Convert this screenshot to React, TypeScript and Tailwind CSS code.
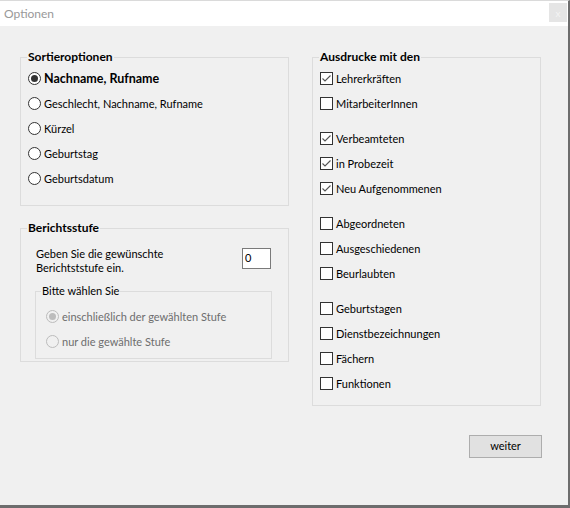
import React from "react";

const FONT = "font-['Lato',sans-serif]";

// Round option button, as drawn by the classic Windows dialog
const Radio: React.FC<{ label: string; checked?: boolean; disabled?: boolean; bold?: boolean }> = ({
  label,
  checked,
  disabled,
  bold,
}) => (
  <div className="flex h-[25px] items-center gap-[3px]">
    <span
      className={`flex h-[13px] w-[13px] shrink-0 items-center justify-center rounded-full border ${
        disabled ? "border-[#bcbcbc] bg-[#f0f0f0]" : "border-[#333333] bg-white"
      }`}
    >
      {checked && (
        <span className={`h-[7px] w-[7px] rounded-full ${disabled ? "bg-[#bcbcbc]" : "bg-[#333333]"}`} />
      )}
    </span>
    <span
      className={`whitespace-nowrap pt-[2px] ${bold ? "text-[12.5px] font-bold" : "text-[11px]"} ${
        disabled ? "text-[#6d6d6d]" : "text-black"
      }`}
    >
      {label}
    </span>
  </div>
);

const Check: React.FC<{ label: string; checked?: boolean }> = ({ label, checked }) => (
  <div className="flex h-[25px] items-center gap-[3px]">
    <span className="flex h-[13px] w-[13px] shrink-0 items-center justify-center border border-[#333333] bg-white">
      {checked && (
        <svg width="11" height="11" viewBox="0 0 11 11">
          <path d="M1.5 5.5 L4 8 L9.5 2.5" fill="none" stroke="#555" strokeWidth="1.1" />
        </svg>
      )}
    </span>
    <span className="whitespace-nowrap pt-[2px] text-[11px] text-black">{label}</span>
  </div>
);

const Group: React.FC<{ title: string; className?: string; children: React.ReactNode }> = ({
  title,
  className,
  children,
}) => (
  <fieldset className={`border border-[#dcdcdc] pl-[7px] ${className ?? ""}`}>
    <legend className="px-[1px] -ml-[1px] text-[12px] font-bold leading-[14px] text-black">{title}</legend>
    {children}
  </fieldset>
);

const printGroups: { label: string; checked?: boolean }[][] = [
  [{ label: "Lehrerkräften", checked: true }, { label: "MitarbeiterInnen" }],
  [
    { label: "Verbeamteten", checked: true },
    { label: "in Probezeit", checked: true },
    { label: "Neu Aufgenommenen", checked: true },
  ],
  [{ label: "Abgeordneten" }, { label: "Ausgeschiedenen" }, { label: "Beurlaubten" }],
  [{ label: "Geburtstagen" }, { label: "Dienstbezeichnungen" }, { label: "Fächern" }, { label: "Funktionen" }],
];

export default function App() {
  return (
    <div
      className={`${FONT} flex h-[508px] w-[570px] flex-col border-t border-r-2 border-b-[3px] border-t-[#dadada] border-r-[#6d6d6d] border-b-[#6d6d6d] bg-[#f0f0f0]`}
    >
      {/* title bar */}
      <div className="flex h-[25px] items-start justify-between bg-white pl-[4px] pr-[1px]">
        <span className="mt-[5px] text-[12px] leading-[15px] text-[#999999]">Optionen</span>
        <button className="mt-[2px] flex h-[19px] w-[18px] items-center justify-center bg-[#e5e5e5] text-[10px] leading-none text-[#f4f4f4]">
          x
        </button>
      </div>

      <div className="flex flex-1 pl-[20px] pt-[24px]">
        {/* left column */}
        <div className="flex w-[269px] flex-col">
          <Group title="Sortieroptionen" className="pb-[14px]">
            <div className="mt-[2px] flex flex-col">
              <Radio label="Nachname, Rufname" checked bold />
              <Radio label="Geschlecht, Nachname, Rufname" />
              <Radio label="Kürzel" />
              <Radio label="Geburtstag" />
              <Radio label="Geburtsdatum" />
            </div>
          </Group>

          <Group title="Berichtsstufe" className="mt-[15px] pb-[2px]">
            <div className="mt-[11px] flex items-start">
              <p className="pl-[8px] pt-[1px] text-[11px] leading-[14px] text-black">
                Geben Sie die gewünschte
                <br />
                Berichtststufe ein.
              </p>
              <div className="ml-auto mr-[17px] mt-[2px] flex h-[21px] w-[29px] items-center border border-[#7a7a7a] bg-white pl-[2px] text-[11px] text-black">
                0
              </div>
            </div>
            <fieldset className="ml-[7px] mr-[16px] mt-[9px] border border-[#dcdcdc] pb-[4px] pl-[6px]">
              <legend className="px-[1px] -ml-[1px] text-[11px] leading-[14px] text-black">Bitte wählen Sie</legend>
              <div className="ml-[4px] mt-[6px] flex flex-col">
                <Radio label="einschließlich der gewählten Stufe" checked disabled />
                <Radio label="nur die gewählte Stufe" disabled />
              </div>
            </fieldset>
          </Group>
        </div>

        {/* right column */}
        <div className="ml-[23px] flex w-[229px] flex-col">
          <Group title="Ausdrucke mit den" className="pb-[9px]">
            <div className="mt-[2px] flex flex-col gap-[10px]">
              {printGroups.map((group, i) => (
                <div key={i} className="flex flex-col">
                  {group.map((item) => (
                    <Check key={item.label} label={item.label} checked={item.checked} />
                  ))}
                </div>
              ))}
            </div>
          </Group>

          <button className="-mr-[1px] mt-[29px] h-[23px] w-[73px] self-end border border-[#adadad] bg-[#e1e1e1] text-[11px] text-black">
            weiter
          </button>
        </div>
      </div>
    </div>
  );
}
